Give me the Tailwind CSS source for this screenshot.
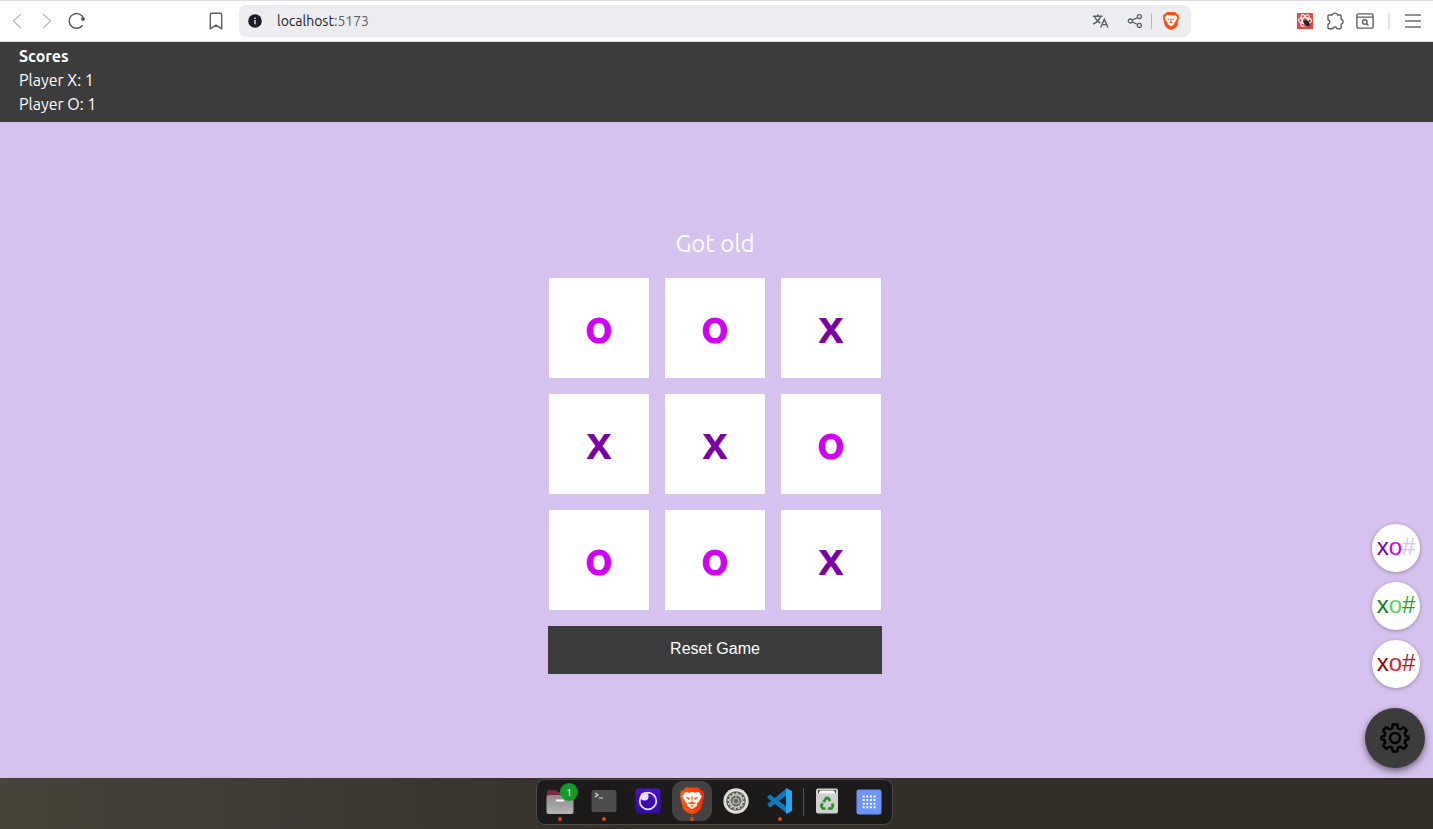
<!DOCTYPE html>
<html lang="en">
<head>
<meta charset="utf-8">
<title>Tic Tac Toe</title>
<script src="https://cdn.jsdelivr.net/npm/@tailwindcss/browser@4"></script>
</head>
<body class="w-[1433px] h-[829px] overflow-hidden flex flex-col font-['Ubuntu','Noto_Sans',sans-serif]">

<!-- Browser toolbar -->
<header class="h-[42px] shrink-0 bg-white border-t border-b border-[#dcdce2] flex items-center text-[#5b5e66]">
  <svg class="ml-[9px] w-4 h-5 text-[#b9bbc0]" viewBox="0 0 16 20" fill="none" stroke="currentColor" stroke-width="1.4"><path d="M12 3 4.500 10 12 17"/></svg>
  <svg class="ml-[14px] w-4 h-5 text-[#b9bbc0]" viewBox="0 0 16 20" fill="none" stroke="currentColor" stroke-width="1.400"><path d="M4 3l7.500 7L4 17"/></svg>
  <svg class="ml-3 w-5 h-5" viewBox="0 0 20 20" fill="none" stroke="currentColor" stroke-width="1.500"><path d="M15.600 14.200A7.400 7.400 0 1 1 15 4.800l1.200 2.200"/><circle cx="16" cy="8" r="2" fill="currentColor" stroke="none"/></svg>
  <svg class="ml-[119px] w-5 h-5" viewBox="0 0 20 20" fill="none" stroke="currentColor" stroke-width="1.400" stroke-linejoin="round"><path d="M6 2.200h8a1.700 1.700 0 0 1 1.700 1.700v14L10 14.200 4.300 17.900v-14A1.700 1.700 0 0 1 6 2.200z"/></svg>
  <div class="ml-[13px] w-[952px] h-8 rounded-lg bg-[#edecf1] flex items-center">
    <svg class="ml-[9px] w-[14px] h-[14px]" viewBox="0 0 14 14"><circle cx="7" cy="7" r="6.800" fill="#1c1b22"/><path d="M7 6v4.200M7 3.600v1.400" stroke="#edecf1" stroke-width="1.400"/></svg>
    <span class="ml-[15px] w-[600px] text-[14px] leading-5 text-[#202124]">localhost<span class="text-[#5b5e66]">:5173</span></span>
    <svg class="ml-auto w-[17px] h-4" viewBox="0 0 17 16" fill="none" stroke="currentColor" stroke-width="1.400"><path d="M1 3.200h9.500M5.700 1.300v2M2.700 3.300c1 3.200 3.500 5.700 5.700 6.700M8.600 3.300C7.600 7 4.500 9.600 1 11M8.700 14.500l3.600-8.300 3.600 8.300M10 11.600h4.700"/></svg>
    <svg class="ml-[18px] w-4 h-4" viewBox="0 0 16 16" fill="none" stroke="currentColor" stroke-width="1.300"><circle cx="3.300" cy="8" r="2"/><circle cx="12.400" cy="3.600" r="2"/><circle cx="12.400" cy="12.400" r="2"/><path d="m5.200 7.200 5.300-2.700M5.200 8.900l5.300 2.600"/></svg>
    <div class="ml-2 w-px h-4 bg-[#b4b5bc]"></div>
    <svg class="ml-[11px] mr-3 w-4 h-[18px]" viewBox="0 0 32 36"><path fill="#ff4b0b" d="M8 0h16l4 4 3 1 1 7-4 16-5 5-7 3-7-3-5-5L0 12l1-7 3-1z"/><path fill="#fff" d="m7 6 5 1 4-1 4 1 5-1 4 6-4 7-3 3 1 2-7 5-7-5 1-2-3-3-4-7z"/><path fill="#ff4b0b" d="m8 12 5 2-1 2.500zm16 0-5 2 1 2.500zM14.500 13h3l-.8 6 2.800 2-3.500 1.800-3.500-1.800 2.800-2z"/></svg>
  </div>
  <svg class="ml-[106px] w-4 h-4" viewBox="0 0 16 16"><path fill="#dc4b3e" d="M0 0h16v16H0z"/><g fill="none" stroke="#fff" stroke-width="1.100"><ellipse cx="8" cy="7.500" rx="6.500" ry="2.700"/><ellipse cx="8" cy="7.500" rx="6.500" ry="2.700" transform="rotate(60 8 7.500)"/><ellipse cx="8" cy="7.500" rx="6.500" ry="2.700" transform="rotate(120 8 7.500)"/></g><ellipse cx="9.800" cy="10.300" rx="2.500" ry="3.600" fill="#33201e" transform="rotate(-35 9.800 10.300)"/><path d="m6 8.500 7.500 4.500M6.500 13l6.500-5.500" stroke="#33201e"/></svg>
  <svg class="ml-3 w-5 h-5" viewBox="0 0 20 20" fill="none" stroke="currentColor" stroke-width="1.400" stroke-linejoin="round"><path d="M4 4H7.200a2.800 2.500 0 0 1 5.400 0h2.500a1 1 0 0 1 1 1v3.300a2.500 2.500 0 0 1 0 4.900v3.600a1 1 0 0 1-1 1H12.200a2.300 2.200 0 0 0-4.500 0H4a1 1 0 0 1-1-1v-3.600a2.300 2.300 0 0 0 0-4.500V5a1 1 0 0 1 1-1z"/></svg>
  <svg class="ml-[11px] w-[18px] h-4" viewBox="0 0 18 16" fill="none" stroke="currentColor" stroke-width="1.400"><rect x=".9" y=".9" width="16.200" height="14.200" rx="1.500"/><path d="M1 4.100h16M10.400 10.500l2 2"/><circle cx="8.800" cy="9" r="2.200"/></svg>
  <div class="ml-[14px] w-[2px] h-4 bg-[#dfdfe5]"></div>
  <svg class="ml-[14px] w-[18px] h-4" viewBox="0 0 18 16" stroke="#6b6e75" stroke-width="1.500"><path d="M1 2h16M1 8h16M1 14h16"/></svg>
</header>

<!-- Scores -->
<section class="h-20 shrink-0 bg-[#3c3c3c] text-white pl-[19px] pt-[2px] text-[16px] leading-6">
  <h2 class="font-bold">Scores</h2>
  <p>Player X: 1</p>
  <p>Player O: 1</p>
</section>

<!-- Game -->
<main class="relative h-[656px] shrink-0 bg-[#d7c1ee] flex flex-col items-center pr-[3px] pt-[104px]">
  <p class="h-9 text-white text-[24px] leading-9">Got old</p>
  <div class="mt-4 grid grid-cols-3 gap-4 text-[48px] font-bold text-[#d000f5]">
    <div class="w-[100px] h-[100px] pb-[6px] bg-white flex items-center justify-center">o</div>
    <div class="w-[100px] h-[100px] pb-[6px] bg-white flex items-center justify-center">o</div>
    <div class="w-[100px] h-[100px] pb-[6px] bg-white flex items-center justify-center text-[#7c00a4]">x</div>
    <div class="w-[100px] h-[100px] pb-[6px] bg-white flex items-center justify-center text-[#7c00a4]">x</div>
    <div class="w-[100px] h-[100px] pb-[6px] bg-white flex items-center justify-center text-[#7c00a4]">x</div>
    <div class="w-[100px] h-[100px] pb-[6px] bg-white flex items-center justify-center">o</div>
    <div class="w-[100px] h-[100px] pb-[6px] bg-white flex items-center justify-center">o</div>
    <div class="w-[100px] h-[100px] pb-[6px] bg-white flex items-center justify-center">o</div>
    <div class="w-[100px] h-[100px] pb-[6px] bg-white flex items-center justify-center text-[#7c00a4]">x</div>
  </div>
  <button class="mt-4 w-[334px] h-12 pb-[3px] bg-[#3c3c3c] text-white text-[16px] font-['Liberation_Sans',Arial,sans-serif]">Reset Game</button>

  <!-- Theme picker -->
  <aside class="absolute right-2 bottom-[10px] flex flex-col items-center text-[24px] leading-none font-['Liberation_Sans',Arial,sans-serif]">
    <button class="ml-[2px] mb-[10px] w-12 h-12 rounded-full bg-white shadow-[0_1px_4px_rgba(0,0,0,0.3)] flex items-center justify-center pb-[2px]"><span class="text-[#7c00a4]">x</span><span class="text-[#d000f5]">o</span><span class="text-[#d7c1ee]">#</span></button>
    <button class="ml-[2px] mb-[10px] w-12 h-12 rounded-full bg-white shadow-[0_1px_4px_rgba(0,0,0,0.3)] flex items-center justify-center pb-[2px]"><span class="text-[#128012]">x</span><span class="text-[#5ad35a]">o</span><span class="text-[#22a122]">#</span></button>
    <button class="ml-[2px] mb-5 w-12 h-12 rounded-full bg-white shadow-[0_1px_4px_rgba(0,0,0,0.3)] flex items-center justify-center pb-[2px]"><span class="text-[#8b0000]">x</span><span class="text-[#e3173e]">o</span><span class="text-[#b50f2a]">#</span></button>
    <button class="w-[60px] h-[60px] rounded-full bg-[#3c3c3c] shadow-[0_3px_7px_rgba(0,0,0,0.5)] flex items-center justify-center">
      <svg class="w-[30px] h-[30px]" viewBox="1 1 30 30" fill="none" stroke="#000" stroke-width="2.500" stroke-linejoin="round"><circle cx="16" cy="16" r="5"/><path d="M13.800 2.500h4.400l.8 3.800 2.500 1 3.200-2.100 3.100 3.100-2.100 3.200 1 2.500 2.800.6v2.800l-2.800.6-1 2.500 2.100 3.200-3.100 3.100-3.200-2.100-2.500 1-.8 3.800h-4.400l-.8-3.800-2.500-1-3.200 2.100-3.100-3.100 2.100-3.200-1-2.500-2.800-.6v-2.800l2.800-.6 1-2.500-2.100-3.200 3.100-3.100 3.200 2.100 2.500-1z"/></svg>
    </button>
  </aside>
</main>

<!-- Dock -->
<footer class="h-[51px] shrink-0 bg-linear-to-r from-[#48443a] to-[#352f2a] to-45% flex justify-center items-start pr-[4px] pt-px">
  <nav class="w-[357px] h-[46px] rounded-[9px] border border-[#4b4a48] bg-[#1c1b1a] flex items-start pl-[3px]">
    <div class="w-10 mr-1 h-11 relative flex flex-col items-center">
      <svg class="mt-[7px] w-7 h-7" viewBox="0 0 28 28"><defs><linearGradient id="fold" x1="0" y1="0" x2="0" y2="1"><stop stop-color="#8c8c8c"/><stop offset="1" stop-color="#b4b4b4"/></linearGradient></defs><path fill="#7a2748" d="M1 5a2 2 0 0 1 2-2h7l2 2h14v8H1z"/><rect x=".5" y="8" width="27" height="19" rx="2" fill="url(#fold)"/><path d="M10 13.500h8" stroke="#fff" stroke-width="2"/></svg>
      <div class="absolute left-[20px] top-[3px] w-[18px] h-[18px] rounded-full bg-[#149a26] text-white text-[10px] flex items-center justify-center">1</div>
      <i class="mt-[2px] w-1 h-1 rounded-full bg-[#dc4a1c]"></i>
    </div>
    <div class="w-10 mr-1 h-11 flex flex-col items-center">
      <svg class="mt-[7px] w-7 h-7" viewBox="0 0 28 28"><rect x="1.500" y="3" width="25" height="22" rx="2.500" fill="#4c4c4c"/><path d="m5 6 3 2-3 2M9 11h4" fill="none" stroke="#ddd" stroke-width="1.200"/></svg>
      <i class="mt-[2px] w-1 h-1 rounded-full bg-[#dc4a1c]"></i>
    </div>
    <div class="w-10 mr-1 h-11 flex flex-col items-center">
      <svg class="mt-[7px] w-7 h-7" viewBox="0 0 28 28"><defs><linearGradient id="eye" x1="0" y1="0" x2="0" y2="1"><stop stop-color="#4a12cc"/><stop offset="1" stop-color="#330a9c"/></linearGradient></defs><rect x="1.500" y="1.500" width="25" height="25" rx="3.500" fill="url(#eye)"/><circle cx="14" cy="14" r="8.300" fill="none" stroke="#e8e2ff" stroke-width="1.800"/><circle cx="10.500" cy="9.500" r="4" fill="#e8e2ff"/></svg>
    </div>
    <div class="w-10 mr-1 h-10 mt-px rounded-[11px] bg-[#444342] flex flex-col items-center">
      <svg class="mt-[6px] w-6 h-7" viewBox="0 0 32 36"><defs><linearGradient id="lion"><stop stop-color="#fb5a10"/><stop offset="1" stop-color="#fb3004"/></linearGradient></defs><path fill="url(#lion)" d="M8 0h16l4 4 3 1 1 7-4 16-5 5-7 3-7-3-5-5L0 12l1-7 3-1z"/><path fill="#fff" d="m7 6 5 1 4-1 4 1 5-1 4 6-4 7-3 3 1 2-7 5-7-5 1-2-3-3-4-7z"/><path fill="#fb4a0e" d="m7 12 6 2-1 3zm18 0-6 2 1 3zM15 12h2l-.5 7 3.500 2-4 1.500-4-1.500 3.500-2zM11 19l3 2-2 1.500zm10 0-3 2 2 1.500zM13 24.500l3-1 3 1-3 1z"/></svg>
      <i class="mt-[2px] w-1 h-1 shrink-0 rounded-full bg-[#dc4a1c]"></i>
    </div>
    <div class="w-10 mr-1 h-11 flex flex-col items-center">
      <svg class="mt-[7px] w-7 h-7" viewBox="0 0 28 28" fill="none"><circle cx="14" cy="14" r="12.700" fill="#deded9"/><circle cx="14" cy="14" r="9.800" fill="#5d5d59"/><circle cx="14" cy="14" r="7.700" stroke="#c9c9c4" stroke-width="1.800" stroke-dasharray="2 2.030"/><circle cx="14" cy="14" r="6.200" stroke="#c9c9c4" stroke-width="1.600"/><circle cx="14" cy="14" r="2.800" stroke="#aaaaa5" stroke-width="1.600"/><path d="M14 8v3M9 17l2.500-1.500M19 17l-2.500-1.500" stroke="#aaaaa5" stroke-width="1.200"/></svg>
    </div>
    <div class="w-10 mr-1 h-11 flex flex-col items-center">
      <svg class="mt-[7px] w-7 h-7" viewBox="0 0 28 28"><path fill="#087dc1" d="m1.500 9.500 2.500-2 17 12.500v6.500L1.500 11z"/><path fill="#1177bb" d="m1.500 18 2.500 2.500L21 8V1L1.500 17z"/><path fill="#27a5ef" d="m20 1 6 3v20l-6 3z"/></svg>
      <i class="mt-[2px] w-1 h-1 rounded-full bg-[#dc4a1c]"></i>
    </div>
    <div class="ml-[-1px] mt-2 w-px h-7 bg-[#555452]"></div>
    <div class="w-10 ml-[3px] h-11 flex flex-col items-center">
      <svg class="mt-[7px] w-7 h-7" viewBox="0 0 28 28"><rect x="3" y="1.500" width="22" height="25" rx="2" fill="#d0d0cd"/><path fill="#4c4c4a" d="M5 3h18v3.500H5z"/><path fill="#fff" d="M7 3.500h14l1.500 3.200h-17z"/><g fill="none" stroke="#24902b" stroke-width="2.600"><path d="m10.500 15 2.700-4h2l2 3M19 16.500l1 2-1.500 3H15M12.500 21.500H9.700l-1.500-3 1.500-2.300"/></g></svg>
    </div>
    <div class="w-10 ml-[2px] h-11 flex flex-col items-center">
      <svg class="mt-[7px] w-7 h-7" viewBox="0 0 28 28"><rect x="1.500" y="2.500" width="25" height="25" rx="2.500" fill="#6c94f6"/><path d="M7.700 9.500h13M7.700 13.100h13M7.700 16.700h13M7.700 20.300h13" stroke="#fff" stroke-width="2" stroke-dasharray="2 1.600"/></svg>
    </div>
  </nav>
</footer>
</body>
</html>
